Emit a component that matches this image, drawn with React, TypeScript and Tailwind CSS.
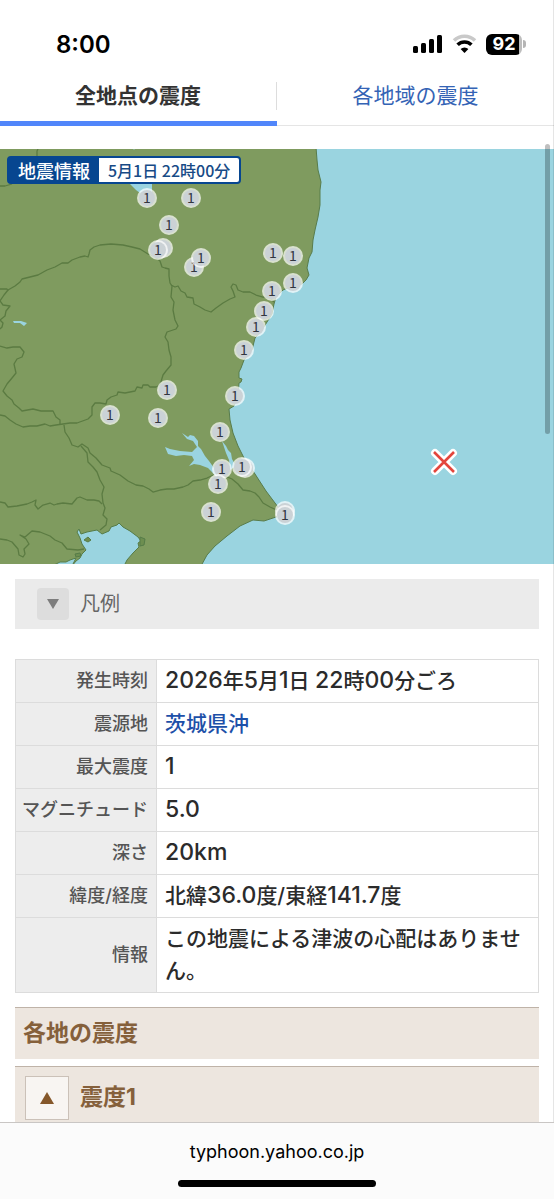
import React from "react";

type Station = { x: number; y: number; covered?: boolean };

const stations: Station[] = [
  { x: 147, y: 198 },
  { x: 191, y: 198 },
  { x: 169, y: 225 },
  { x: 163, y: 248, covered: true },
  { x: 158, y: 250 },
  { x: 194, y: 267 },
  { x: 201, y: 258 },
  { x: 273, y: 253 },
  { x: 293, y: 256 },
  { x: 293, y: 283 },
  { x: 272, y: 291 },
  { x: 264, y: 311 },
  { x: 256, y: 327 },
  { x: 244, y: 350 },
  { x: 235, y: 396 },
  { x: 167, y: 390 },
  { x: 110, y: 415 },
  { x: 158, y: 418 },
  { x: 220, y: 432 },
  { x: 222, y: 469 },
  { x: 245, y: 468, covered: true },
  { x: 242, y: 467 },
  { x: 218, y: 484 },
  { x: 211, y: 512 },
  { x: 285, y: 511, covered: true },
  { x: 285, y: 515 },
];

const borders: string[] = [
  "M38 149 L37 151 L37 160",
  "M0 186 L5 186 L12 184",
  "M0 301 L4 295 L8 290 L15 286 L20 282 L22 279 L30 277 L38 275 L47 270 L55 267 L62 263 L68 263 L72 260 L80 257 L85 256 L88 257 L89 254 L90 250 L94 247 L100 245 L111 244 L123 245 L132 247 L140 249 L148 254 L155 257 L160 261 L162 267 L165 268 L169 269 L169 276 L170 283 L172 286 L171 297 L174 302 L173 310 L175 320 L178 326 L176 329 L167 332 L165 337 L168 342 L169 350 L171 357 L171 365 L166 371 L163 375 L160 385 L156 387 L150 387 L148 385 L143 385 L142 388 L137 387 L135 391 L125 393 L118 392 L117 395 L111 397 L107 400 L106 404 L100 403 L95 403 L92 407 L92 415 L88 419 L77 423 L70 423 L63 424 L56 425 L50 426 L45 424 L37 426 L30 426 L23 427 L16 424 L10 420 L5 416 L0 415",
  "M171 285 L175 287 L178 286 L181 291 L185 293 L187 297 L193 298 L194 304 L200 307 L205 310 L211 312 L216 308 L223 303 L230 299 L235 297 L233 291 L231 287 L233 284 L236 285 L238 290 L243 292 L250 292 L256 295 L263 297 L270 298 L274 302",
  "M0 289 L7 289 L8 291",
  "M0 301 L3 305 L10 306 L6 311 L5 316 L0 320 L3 323 L2 327 L0 329",
  "M0 346 L7 348 L13 347 L20 347 L24 352 L22 357 L17 359 L14 364 L16 373 L12 378 L7 384 L3 391 L7 396 L12 400 L14 404 L19 408 L22 411 L33 409 L41 411 L53 411 L56 417 L60 420 L60 425",
  "M64 425 L65 432 L69 438 L72 445 L78 447 L82 444 L88 448 L90 453 L96 458 L102 465 L110 468 L111 471 L120 475 L128 481 L136 485 L143 486 L149 489 L153 492 L160 490 L167 489 L174 489 L183 487 L188 485 L193 481 L200 480 L207 478 L218 473 L232 479 L238 484 L243 490 L250 491 L255 493 L259 497 L263 503 L270 507 L279 511",
  "M81 446 L87 453 L88 462 L93 467 L97 472 L100 480 L104 487 L102 494 L103 503 L105 508 L103 515 L107 519 L106 525 L100 530",
  "M0 502 L5 503 L8 507 L17 506 L27 504 L32 502 L36 500 L35 505 L38 509 L43 505 L50 503 L54 505 L57 504 L63 503 L72 504 L77 498 L80 497 L87 500 L94 500 L99 501 L102 504",
  "M0 539 L7 540 L12 542 L18 549 L19 555 L23 557 L25 554 L24 549 L29 544 L26 539 L20 535 L25 537 L32 531 L40 532 L50 536 L55 540 L62 543 L67 549 L78 550 L84 549",
];

function EarthquakeMap() {
  return (
    <svg
      viewBox="0 149 554 415"
      className="block w-full"
      role="img"
      aria-labelledby="map-title"
    >
      <title id="map-title">地震情報</title>
      <rect x="0" y="149" width="554" height="415" fill="#9ad4e0" />
      <path
        d="M-2 147 L316 147 L317 160 L318 170 L321 182 L320 190 L320 205 L318 217 L315 230 L313 240 L312 252 L309 258 L307 268 L309 275 L306 280 L302 284 L290 287 L283 290 L276 297 L274 304 L272 314 L262 330 L255 338 L252 350 L244 360 L241 368 L239 372 L239 378 L242 379 L241 382 L239 383 L238 396 L234 406 L229 409 L230 420 L233 433 L238 446 L244 458 L255 474 L266 491 L278 507 L288 514 L276 517 L264 521 L253 520 L240 526 L227 536 L215 546 L207 555 L201 566 L-2 566 Z"
        fill="#7f9b5f"
        stroke="#587c4b"
        strokeWidth="1"
      />
      <g fill="none" stroke="#5b7b42" strokeWidth="1.3" strokeLinejoin="round">
        {borders.map((d) => (
          <path key={d} d={d} />
        ))}
      </g>
      <g fill="#9ad4e0" stroke="#567c48" strokeWidth="1" strokeLinejoin="round">
        <path d="M72 566 L76 561 L80 558 L82 554 L86 550 L82 544 L80 538 L77 532 L79 529 L81 534 L87 532 L97 530 L102 534 L109 531 L111 527 L117 525 L119 523 L123 527 L130 531 L138 537 L141 541 L138 543 L139 547 L133 553 L127 560 L124 566 Z" />
        <path d="M52 566 L60 562 L66 562 L70 560 L76 558 L72 566 Z" />
        <path
          d="M84 540 L88 537 L91 540 L88 542 Z M140 537 L145 539 L144 545 L140 546 Z M75 554 L80 553 L81 556 L76 557 Z"
          fill="#6d8e50"
        />
      </g>
      <g fill="#9ad4e0">
        <path d="M165 447 L170 449 L180 451 L192 452 L195 449 L197 447 L193 441 L187 439 L182 433 L188 437 L190 435 L194 436 L198 441 L198 446 L201 449 L205 456 L209 461 L214 468 L218 478 L213 473 L208 468 L200 465 L194 464 L189 466 L194 460 L192 456 L184 455 L176 456 L168 454 Z" />
        <path d="M222 441 L226 446 L228 450 L231 453 L232 459 L236 466 L230 470 L229 460 L226 453 Z" />
        <path d="M13 321 L21 321 L27 323 L24 326 L20 323 L14 323 Z" />
        <path d="M130 184 L152 184 L152 192 L140 193 L136 190 Z" />
        <path d="M132 147 L136 147 L134 150 Z" />
      </g>
      <g
        textAnchor="middle"
        fontSize="14"
        fontWeight="400"
        className="font-['Noto_Sans_CJK_JP',sans-serif]"
      >
        {stations.map(({ x, y, covered }) => (
          <g key={`${x}-${y}`}>
            <circle cx={x} cy={y} r="10" fill="#ffffff" fillOpacity="0.7" />
            <circle cx={x} cy={y} r="8" fill="#cbd2d6" />
            {!covered && (
              <text x={x} y={y + 5} fill="#32363f">
                1
              </text>
            )}
          </g>
        ))}
      </g>
      <g fill="none" strokeLinecap="round">
        <path d="M435 453 L453 471 M453 453 L435 471" stroke="#ffffff" strokeWidth="8" />
        <path
          d="M434 452 L454 472 M454 452 L434 472"
          stroke="#e3463d"
          strokeWidth="2.6"
          strokeLinecap="butt"
        />
      </g>
    </svg>
  );
}

function StatusBar() {
  return (
    <div className="flex h-[82px] items-start justify-between pt-[31px] pr-7 pl-14 text-black">
      <time className="font-['Inter',sans-serif] text-2xl leading-7 font-semibold">8:00</time>
      <div className="flex h-[26px] items-center gap-[9px]">
        <svg width="30" height="20" viewBox="0 0 30 20" aria-hidden="true">
          <rect x="0" y="12" width="5" height="7" rx="1.5" />
          <rect x="8" y="9" width="5" height="10" rx="1.5" />
          <rect x="16" y="5" width="5" height="14" rx="1.5" />
          <rect x="24" y="1" width="5" height="18" rx="1.5" />
        </svg>
        <svg width="25" height="20" viewBox="0 0 25 20" aria-hidden="true">
          <path
            d="M2 6.5 A15 15 0 0 1 23 6.5"
            fill="none"
            stroke="#c9c9c9"
            strokeWidth="3.6"
          />
          <path
            d="M5.6 10.8 A9.8 9.8 0 0 1 19.4 10.8"
            fill="none"
            stroke="#000000"
            strokeWidth="3.6"
          />
          <path d="M12.5 19 L8.6 15 A5.6 5.6 0 0 1 16.4 15 Z" />
        </svg>
        <div className="flex items-center gap-px">
          <div className="flex h-[21px] w-9 items-center justify-center rounded-md bg-linear-to-r from-black from-92% to-[#bdbdbd] to-92% font-['Inter',sans-serif] text-lg leading-5 font-bold text-white">
            92
          </div>
          <div className="h-2 w-[3px] rounded-r-full bg-[#b5b5b5]" />
        </div>
      </div>
    </div>
  );
}

/** Sets digits and Latin letters a little larger than the kana and kanji beside them. */
function MixedText({ text }: { text: string }) {
  return (
    <>
      {text.split(/([0-9A-Za-z.]+)/).map((part, i) =>
        i % 2 === 1 ? (
          <span key={i} className="text-[23px] leading-none">
            {part}
          </span>
        ) : (
          part
        ),
      )}
    </>
  );
}

function Row({ label, value, href }: { label: string; value: string; href?: string }) {
  return (
    <tr>
      <th
        scope="row"
        className="w-[141px] border border-[#dcdcdc] bg-[#ededed] py-[5px] pr-2 text-right align-middle text-lg leading-8 font-medium whitespace-nowrap text-[#555555]"
      >
        {label}
      </th>
      <td className="border border-[#dcdcdc] px-2 py-[5px] text-[21px] leading-8 font-medium text-[#2b2b2b]">
        {href ? (
          <a href={href} className="text-[#1d50a8]">
            {value}
          </a>
        ) : (
          <MixedText text={value} />
        )}
      </td>
    </tr>
  );
}

export default function App() {
  return (
    <div className="relative min-h-screen overflow-hidden bg-white pb-[77px] font-['Inter','Noto_Sans_CJK_JP',sans-serif]">
      <StatusBar />
      <nav className="flex text-[21px] leading-7">
        <a
          href="#points"
          aria-current="page"
          className="flex-1 border-b-[5px] border-[#5186fa] text-center font-bold text-[#333333]"
        >
          <span className="mb-[11px] block border-r border-[#dddddd]">全地点の震度</span>
        </a>
        <a
          href="#areas"
          className="flex-1 border-b border-[#e5e5e5] text-center text-[#3463b5]"
        >
          各地域の震度
        </a>
      </nav>

      <main>
        <section className="relative mt-[23px]">
          <EarthquakeMap />
          <div className="absolute top-[7px] left-[7px] flex rounded border-2 border-[#074690] bg-white font-['Noto_Sans_CJK_JP',sans-serif] leading-6 font-medium">
            <span className="bg-[#074690] px-[9px] text-lg leading-6 text-white">地震情報</span>
            <time className="px-[9px] text-base leading-6 text-[#174a86]">5月1日 22時00分</time>
          </div>
        </section>

        <div className="px-[15px]">
          <div className="mt-[15px] flex h-[50px] items-center gap-[11px] bg-[#ebebeb] pl-[22px]">
            <button
              type="button"
              aria-labelledby="legend-label"
              aria-expanded="false"
              className="flex size-8 items-center justify-center rounded bg-[#dddddd]"
            >
              <svg width="12" height="10" viewBox="0 0 12 10" aria-hidden="true">
                <path d="M0 0 H12 L6 10 Z" fill="#7d7d7d" />
              </svg>
            </button>
            <span id="legend-label" className="text-xl text-[#666666]">
              凡例
            </span>
          </div>

          <table className="mt-[30px] w-full border-collapse">
            <tbody>
              <Row label="発生時刻" value="2026年5月1日 22時00分ごろ" />
              <Row label="震源地" value="茨城県沖" href="#epicenter" />
              <Row label="最大震度" value="1" />
              <Row label="マグニチュード" value="5.0" />
              <Row label="深さ" value="20km" />
              <Row label="緯度/経度" value="北緯36.0度/東経141.7度" />
              <Row label="情報" value="この地震による津波の心配はありません。" />
            </tbody>
          </table>

          <h2 className="mt-[14px] border-t border-[#bfb3a8] bg-[#ede6df] px-2 py-2 text-[23px] leading-[35px] font-bold text-[#85603b]">
            各地の震度
          </h2>
          <div className="mt-[7px] flex h-[62px] items-center gap-[11px] border-t border-[#bfb3a8] bg-[#ede6df] pl-[10px]">
            <button
              type="button"
              aria-labelledby="level-label"
              aria-expanded="true"
              className="flex size-11 items-center justify-center border border-[#cbc1b8] bg-[#f8f5f2]"
            >
              <svg width="14" height="12" viewBox="0 0 14 12" aria-hidden="true">
                <path d="M7 0 L14 12 H0 Z" fill="#85572a" />
              </svg>
            </button>
            <h3 id="level-label" className="text-[23px] leading-[35px] font-bold text-[#85603b]">
              震度1
            </h3>
          </div>
        </div>
      </main>

      <div className="absolute inset-y-0 right-0 w-px bg-black/10" />
      <div className="absolute top-36 right-1 h-[290px] w-[5px] rounded-full bg-black/25" />

      <footer className="fixed inset-x-0 bottom-0 flex h-[77px] flex-col items-center border-t border-[#c9c6c4] bg-[#fbfbfb] pt-[17px]">
        <p className="font-['Inter',sans-serif] text-lg leading-6 text-black">typhoon.yahoo.co.jp</p>
        <div className="mt-4 h-[7px] w-[198px] rounded-full bg-black" />
      </footer>
    </div>
  );
}
